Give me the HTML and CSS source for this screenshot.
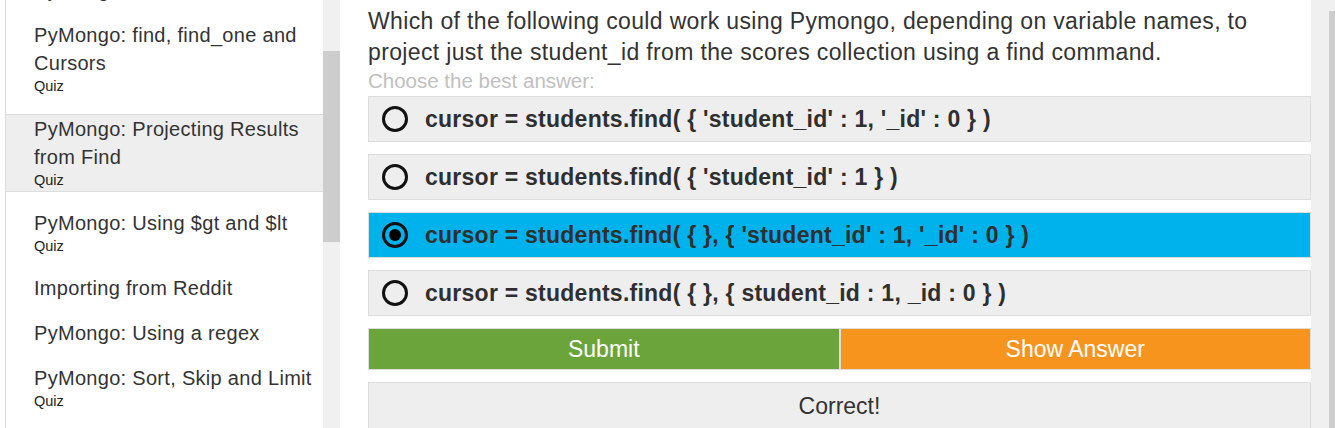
FILE: index.html
```html
<!DOCTYPE html>
<html>
<head>
<meta charset="utf-8">
<link rel="stylesheet" href="styles.css">
</head>
<body>
<div class="page">
  <aside class="sidebar">
    <div class="lessons">
      <ul class="lesson-list">
        <li class="lesson"><div class="title">PyMongo: Intro</div></li>
        <li class="lesson"><div class="title">PyMongo: find, find_one and Cursors</div><div class="kind">Quiz</div></li>
        <li class="lesson active"><div class="title">PyMongo: Projecting Results from Find</div><div class="kind">Quiz</div></li>
        <li class="lesson"><div class="title">PyMongo: Using $gt and $lt</div><div class="kind">Quiz</div></li>
        <li class="lesson"><div class="title">Importing from Reddit</div></li>
        <li class="lesson"><div class="title">PyMongo: Using a regex</div></li>
        <li class="lesson"><div class="title">PyMongo: Sort, Skip and Limit</div><div class="kind">Quiz</div></li>
      </ul>
    </div>
    <div class="scrollbar"><div class="thumb"></div></div>
  </aside>
  <main class="main">
    <p class="question">Which of the following could work using Pymongo, depending on variable names, to project just the student_id from the scores collection using a find command.</p>
    <p class="hint">Choose the best answer:</p>
    <div class="options">
      <label class="option"><span class="radio"></span><span class="code">cursor = students.find( { 'student_id' : 1, '_id' : 0 } )</span></label>
      <label class="option"><span class="radio"></span><span class="code">cursor = students.find( { 'student_id' : 1 } )</span></label>
      <label class="option selected"><span class="radio checked"></span><span class="code">cursor = students.find( { }, { 'student_id' : 1, '_id' : 0 } )</span></label>
      <label class="option"><span class="radio"></span><span class="code">cursor = students.find( { }, { student_id : 1, _id : 0 } )</span></label>
    </div>
    <div class="actions">
      <button class="btn submit">Submit</button>
      <button class="btn answer">Show Answer</button>
    </div>
    <div class="result">Correct!</div>
  </main>
  <div class="page-scroll"><div class="track"></div><div class="edge"><div class="edge-thumb"></div></div></div>
</div>
</body>
</html>
```
FILE: styles.css
```css
* { box-sizing: border-box; }
html, body { margin: 0; padding: 0; height: 100%; overflow: hidden; background: #fff; }
body { font-family: "Liberation Sans", Arial, sans-serif; color: #333; }

.page { display: flex; height: 428px; }

.sidebar {
  display: flex;
  width: 335px;
  margin-left: 5px;
  border-left: 1px solid #dcdcdc;
  height: 100%;
}
.lessons { flex: 1; overflow: hidden; }
.lesson-list {
  list-style: none;
  margin: -24px 0 0 0;
  padding: 0;
  display: flex;
  flex-direction: column;
  gap: 17px;
}
.lesson { padding: 0 0 0 28px; }
.lesson .title { font-size: 20px; line-height: 28px; color: #333; letter-spacing: 0.3px; }
.lesson .kind { font-size: 14.5px; line-height: 18px; color: #222; padding-bottom: 2px; }
.lesson.active { background: #eeeeee; border-top: 1px solid #dddddd; border-bottom: 1px solid #dddddd; }

.scrollbar { width: 17px; background: #f0f0f0; }
.thumb { margin-top: 51px; height: 191px; background: #cdcdcd; }

.main { flex: 1; padding: 6px 0 0 28px; }
.question { margin: 0; font-size: 23px; line-height: 31px; color: #333; letter-spacing: 0.35px; }
.hint { margin: 1px 0 0; font-size: 20.5px; line-height: 24px; color: #c0c0c0; }

.options { display: flex; flex-direction: column; gap: 12px; margin-top: 3px; }
.option {
  display: flex;
  align-items: center;
  height: 46px;
  padding-left: 13px;
  background: #eeeeee;
  border: 1px solid #dddddd;
}
.option.selected { background: #00b2ec; }
.radio {
  width: 26px; height: 26px;
  border: 3px solid #111;
  border-radius: 50%;
  display: flex; align-items: center; justify-content: center;
  margin-right: 17px;
  flex: none;
}
.radio.checked::after {
  content: "";
  width: 12px; height: 12px;
  border-radius: 50%;
  background: #000;
}
.code { font-weight: bold; font-size: 23px; color: #2f2f2f; letter-spacing: 0.25px; }

.actions { display: flex; margin-top: 12px; }
.btn {
  flex: 1;
  height: 42px;
  border: 1px solid #dddddd;
  font-family: "Liberation Sans", Arial, sans-serif;
  font-size: 23px;
  color: #fff;
  padding: 0;
}
.submit { background: #6ba43a; }
.answer { background: #f7941e; }

.result {
  margin-top: 12px;
  height: 60px;
  background: #eeeeee;
  border: 1px solid #dddddd;
  text-align: center;
  font-size: 23px;
  line-height: 28px;
  padding-top: 9px;
  color: #333;
}

.page-scroll { display: flex; width: 24px; }
.track { width: 18px; background: #f0f0f0; }
.edge { width: 6px; background: #f0f0f0; }
.edge-thumb { margin-top: 11px; height: 417px; background: #cdcdcd; }
```
